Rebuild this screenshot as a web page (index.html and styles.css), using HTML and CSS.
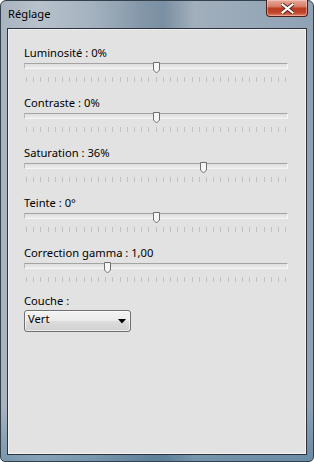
FILE: index.html
```html
<!DOCTYPE html>
<html lang="fr">
<head>
<meta charset="utf-8">
<title>Réglage</title>
<link rel="stylesheet" href="styles.css">
</head>
<body>
<div class="window">
  <div class="titlebar">
    <span class="title">Réglage</span>
    <div class="close">
      <svg width="13" height="11" viewBox="0 0 13 11"><path d="M1.5 1.5 L11.5 9.5 M11.5 1.5 L1.5 9.5" stroke="#5a2418" stroke-width="4" stroke-linecap="square" fill="none"/><path d="M1.5 1.5 L11.5 9.5 M11.5 1.5 L1.5 9.5" stroke="#ffffff" stroke-width="2.2" stroke-linecap="square" fill="none"/></svg>
    </div>
  </div>
  <div class="client">
    <div class="field">
      <div class="label">Luminosité : 0%</div>
      <div class="slider"><div class="track"></div><div class="ticks"></div><div class="thumb" style="left:50%"><svg width="7" height="12" viewBox="0 0 7 12"><path d="M0.5 0.5 H6.5 V8 L3.5 11 L0.5 8 Z" fill="#f6f6f6" stroke="#6f6f6f"/></svg></div></div>
    </div>
    <div class="field">
      <div class="label">Contraste : 0%</div>
      <div class="slider"><div class="track"></div><div class="ticks"></div><div class="thumb" style="left:50%"><svg width="7" height="12" viewBox="0 0 7 12"><path d="M0.5 0.5 H6.5 V8 L3.5 11 L0.5 8 Z" fill="#f6f6f6" stroke="#6f6f6f"/></svg></div></div>
    </div>
    <div class="field">
      <div class="label">Saturation : 36%</div>
      <div class="slider"><div class="track"></div><div class="ticks"></div><div class="thumb" style="left:68%"><svg width="7" height="12" viewBox="0 0 7 12"><path d="M0.5 0.5 H6.5 V8 L3.5 11 L0.5 8 Z" fill="#f6f6f6" stroke="#6f6f6f"/></svg></div></div>
    </div>
    <div class="field">
      <div class="label">Teinte : 0°</div>
      <div class="slider"><div class="track"></div><div class="ticks"></div><div class="thumb" style="left:50%"><svg width="7" height="12" viewBox="0 0 7 12"><path d="M0.5 0.5 H6.5 V8 L3.5 11 L0.5 8 Z" fill="#f6f6f6" stroke="#6f6f6f"/></svg></div></div>
    </div>
    <div class="field">
      <div class="label">Correction gamma : 1,00</div>
      <div class="slider"><div class="track"></div><div class="ticks"></div><div class="thumb" style="left:31.5%"><svg width="7" height="12" viewBox="0 0 7 12"><path d="M0.5 0.5 H6.5 V8 L3.5 11 L0.5 8 Z" fill="#f6f6f6" stroke="#6f6f6f"/></svg></div></div>
    </div>
    <div class="field combo-field">
      <div class="label">Couche :</div>
      <div class="combo">
        <span class="combo-text">Vert</span>
        <svg class="arrow" width="8" height="5" viewBox="0 0 8 5"><path d="M0 0 H8 L4 4.5 Z" fill="#000"/></svg>
      </div>
    </div>
  </div>
</div>
</body>
</html>
```
FILE: styles.css
```css
html, body {
  margin: 0;
  padding: 0;
  width: 314px;
  height: 462px;
  overflow: hidden;
  background: #ffffff;
}
body {
  font-family: "Noto Sans", "DejaVu Sans", sans-serif;
  font-size: 11.2px;
  color: #000;
}
.window {
  box-sizing: border-box;
  width: 314px;
  height: 462px;
  display: flex;
  flex-direction: column;
  position: relative;
  border: 1px solid #34404c;
  border-radius: 6px 6px 5px 5px;
  background:
    linear-gradient(to bottom, rgba(0,0,0,0) 0%, rgba(0,0,0,0) 88%, rgba(30,95,135,0.35) 100%),
    linear-gradient(to right, #a7b3bf 0%, #b8c2cc 12%, #a3b1be 30%, #8497a9 45%, #7a8fa3 52%, #a2afbc 62%, #98a9b9 78%, #8fa2b4 100%);
}
.titlebar {
  height: 27px;
  box-sizing: border-box;
  padding: 5px 0 0 7px;
  line-height: 16px;
}
.title {
  color: #000;
}
.close {
  position: absolute;
  top: -1px;
  right: 5px;
  width: 42px;
  height: 17px;
  box-sizing: border-box;
  border: 1px solid #4b2219;
  border-top: none;
  border-radius: 0 0 4px 4px;
  background: linear-gradient(to bottom, #e6aa9c 0%, #d77d69 40%, #bb3c24 52%, #c1452c 78%, #df7f66 100%);
  display: flex;
  align-items: center;
  justify-content: center;
  box-shadow: inset 0 0 0 1px rgba(255,220,210,0.45);
}
.client {
  flex: 1;
  margin: 0 6px 6px 6px;
  border: 1px solid #2c333d;
  background: #e2e2e2;
  padding: 16px 0 0 16px;
  box-shadow: inset 0 0 0 1px #f2f2f2;
}
.field {
  height: 50px;
}
.label {
  line-height: 15px;
  height: 15px;
  white-space: nowrap;
}
.slider {
  position: relative;
  width: 264px;
  height: 35px;
}
.track {
  position: absolute;
  left: 0;
  top: 3px;
  width: 264px;
  height: 6px;
  box-sizing: border-box;
  border-top: 1px solid #a3a3a3;
  border-left: 1px solid #b8b8b8;
  border-right: 1px solid #f6f6f6;
  border-bottom: 1px solid #f4f4f4;
  background: linear-gradient(to bottom, #dedede, #ececec);
}
.ticks {
  position: absolute;
  left: 2px;
  top: 17px;
  width: 262px;
  height: 5px;
  background: repeating-linear-gradient(to right, #b4b4b4 0, #b4b4b4 1px, rgba(0,0,0,0) 1px, rgba(0,0,0,0) 7.2px);
  opacity: 0.7;
}
.thumb {
  position: absolute;
  top: 2px;
  margin-left: -3.5px;
  width: 7px;
  height: 12px;
  line-height: 0;
}
.combo-field {
  margin-top: -2px;
}
.combo {
  margin-top: 2px;
  width: 107px;
  height: 22px;
  box-sizing: border-box;
  border: 1px solid #707070;
  border-radius: 3px;
  background: linear-gradient(to bottom, #f3f3f3 0%, #ebebeb 48%, #dddddd 52%, #d0d0d0 100%);
  box-shadow: inset 0 0 0 1px rgba(255,255,255,0.6);
  display: flex;
  justify-content: space-between;
  padding: 0 4px 0 3px;
}
.combo-text {
  line-height: 15px;
  align-self: flex-start;
}
.arrow {
  align-self: center;
  margin-top: 0;
}
```
